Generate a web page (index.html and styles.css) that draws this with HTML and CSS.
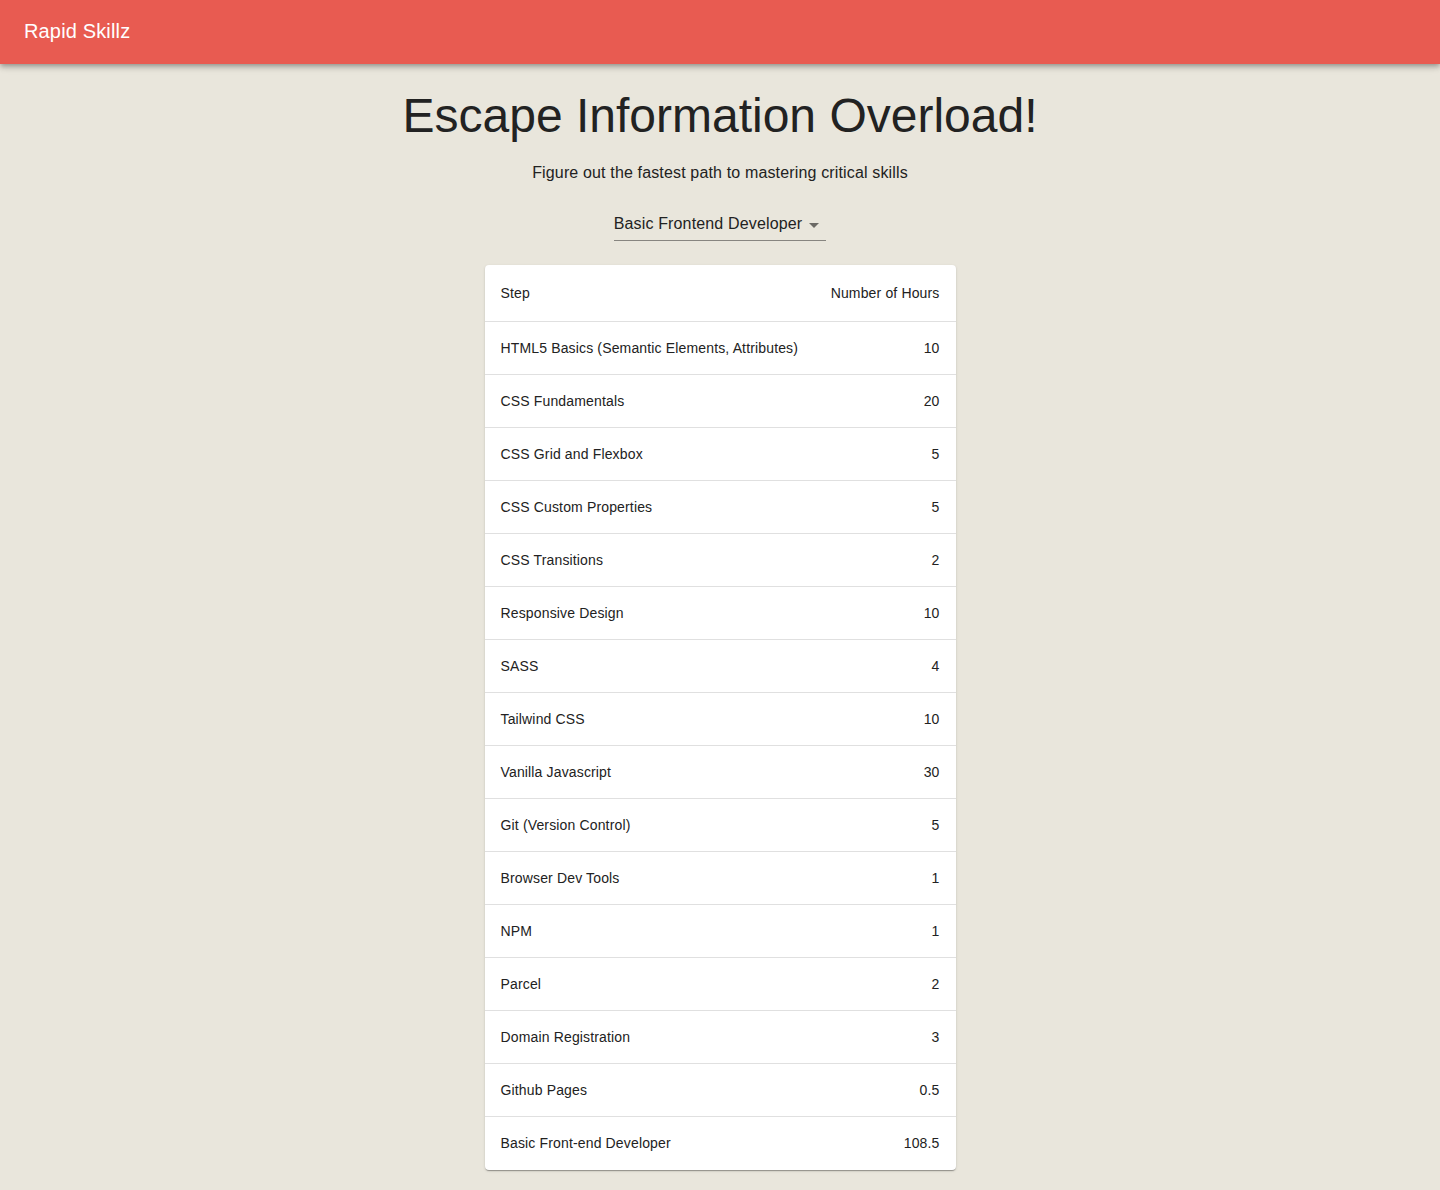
FILE: index.html
```html
<!DOCTYPE html>
<html lang="en">
<head>
<meta charset="utf-8">
<title>Rapid Skillz</title>
<link rel="stylesheet" href="styles.css">
</head>
<body>
<header class="appbar">
  <div class="brand">Rapid Skillz</div>
</header>
<main class="content">
  <h1 class="title">Escape Information Overload!</h1>
  <p class="subtitle">Figure out the fastest path to mastering critical skills</p>
  <div class="select-wrap">
    <div class="select">
      <span class="select-value">Basic Frontend Developer</span>
      <svg class="select-icon" viewBox="0 0 24 24" width="24" height="24" aria-hidden="true"><path d="M7 10l5 5 5-5z"></path></svg>
    </div>
  </div>
  <div class="card">
    <table class="table">
      <thead>
        <tr><th class="cell">Step</th><th class="cell num">Number of Hours</th></tr>
      </thead>
      <tbody>
        <tr><td class="cell">HTML5 Basics (Semantic Elements, Attributes)</td><td class="cell num">10</td></tr>
        <tr><td class="cell">CSS Fundamentals</td><td class="cell num">20</td></tr>
        <tr><td class="cell">CSS Grid and Flexbox</td><td class="cell num">5</td></tr>
        <tr><td class="cell">CSS Custom Properties</td><td class="cell num">5</td></tr>
        <tr><td class="cell">CSS Transitions</td><td class="cell num">2</td></tr>
        <tr><td class="cell">Responsive Design</td><td class="cell num">10</td></tr>
        <tr><td class="cell">SASS</td><td class="cell num">4</td></tr>
        <tr><td class="cell">Tailwind CSS</td><td class="cell num">10</td></tr>
        <tr><td class="cell">Vanilla Javascript</td><td class="cell num">30</td></tr>
        <tr><td class="cell">Git (Version Control)</td><td class="cell num">5</td></tr>
        <tr><td class="cell">Browser Dev Tools</td><td class="cell num">1</td></tr>
        <tr><td class="cell">NPM</td><td class="cell num">1</td></tr>
        <tr><td class="cell">Parcel</td><td class="cell num">2</td></tr>
        <tr><td class="cell">Domain Registration</td><td class="cell num">3</td></tr>
        <tr><td class="cell">Github Pages</td><td class="cell num">0.5</td></tr>
        <tr class="last"><td class="cell">Basic Front-end Developer</td><td class="cell num">108.5</td></tr>
      </tbody>
    </table>
  </div>
</main>
</body>
</html>
```
FILE: styles.css
```css
* { box-sizing: border-box; }

html, body {
  margin: 0;
  padding: 0;
}

body {
  background: #e9e6dc;
  font-family: "Liberation Sans", Helvetica, Arial, sans-serif;
  color: rgba(0, 0, 0, 0.87);
  min-height: 1190px;
}

.appbar {
  height: 64px;
  background: #e85b51;
  color: #fff;
  display: flex;
  align-items: center;
  padding: 0 24px 3px;
  box-shadow: 0 2px 4px -1px rgba(0,0,0,0.2), 0 4px 5px 0 rgba(0,0,0,0.14), 0 1px 10px 0 rgba(0,0,0,0.12);
  position: relative;
  z-index: 1;
}

.brand {
  font-size: 20px;
  font-weight: 400;
  line-height: 32px;
  letter-spacing: 0.0075em;
}

.content {
  display: flex;
  flex-direction: column;
  align-items: center;
  padding-top: 24px;
  padding-bottom: 20px;
}

.title {
  margin: 0;
  font-size: 48px;
  font-weight: 400;
  line-height: 56px;
  color: #222;
}

.subtitle {
  margin: 17px 0 0;
  font-size: 16px;
  line-height: 24px;
  letter-spacing: 0.15px;
  color: #222;
}

.select-wrap {
  margin-top: 27px;
}

.select {
  position: relative;
  display: inline-flex;
  align-items: flex-start;
  height: 29px;
  padding: 2px 24px 0 0;
  border-bottom: 1px solid rgba(0, 0, 0, 0.42);
  font-size: 16px;
  letter-spacing: 0.15px;
  color: #222;
}

.select-value {
  line-height: 19px;
}

.select-icon {
  position: absolute;
  right: 0;
  top: 1px;
  fill: rgba(0, 0, 0, 0.54);
}

.card {
  margin-top: 24px;
  width: 471px;
  background: #fff;
  border-radius: 4px;
  box-shadow: 0 2px 1px -1px rgba(0,0,0,0.2), 0 1px 1px 0 rgba(0,0,0,0.14), 0 1px 3px 0 rgba(0,0,0,0.12);
  overflow: hidden;
}

.table {
  width: 100%;
  border-collapse: collapse;
  border-spacing: 0;
}

.cell {
  font-size: 14px;
  font-weight: 400;
  text-align: left;
  padding: 16px;
  border-bottom: 1px solid #e0e0e0;
  color: #222;
  letter-spacing: 0.01071em;
}

thead .cell {
  line-height: 24px;
  height: 56px;
}

tbody .cell {
  line-height: 20px;
  height: 53px;
}

.last .cell {
  border-bottom: none;
}

.num {
  text-align: right;
}
```
